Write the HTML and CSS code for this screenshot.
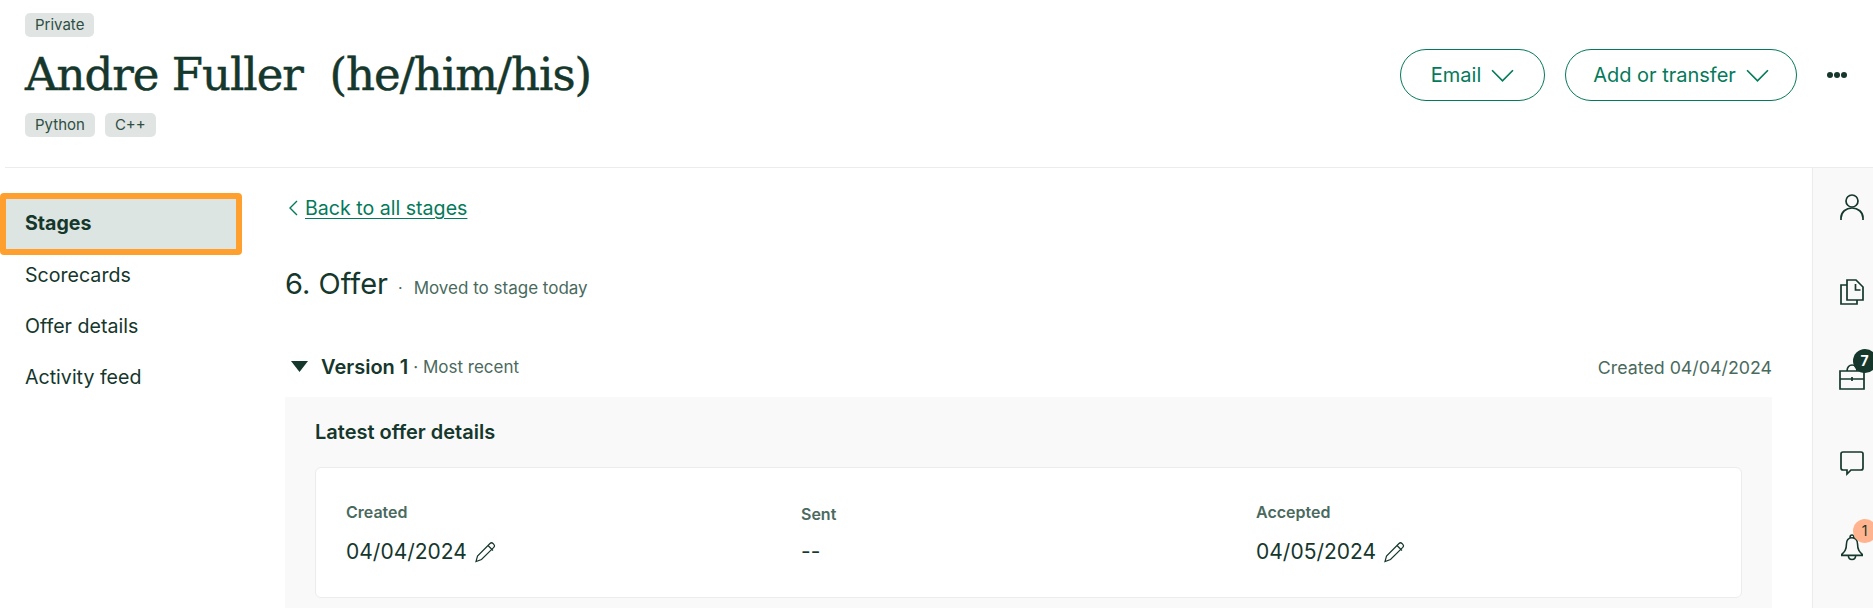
FILE: index.html
```html
<!DOCTYPE html>
<html lang="en">
<head>
    <meta charset="UTF-8">
    <title>Andre Fuller - Offer</title>
    <link rel="stylesheet" href="styles.css">
</head>
<body>
    <header class="page-header">
        <div class="candidate">
            <div class="chips"><span class="chip">Private</span></div>
            <h1>Andre Fuller&nbsp; (he/him/his)</h1>
            <div class="chips"><span class="chip">Python</span><span class="chip">C++</span></div>
        </div>
        <div class="actions">
            <button class="pill pill-email">Email
                <svg class="chevron" viewBox="0 0 22 12"><path d="M1 1l10 10L21 1"/></svg>
            </button>
            <button class="pill pill-add">Add or transfer
                <svg class="chevron" viewBox="0 0 22 12"><path d="M1 1l10 10L21 1"/></svg>
            </button>
            <div class="dots"><i></i><i></i><i></i></div>
        </div>
    </header>

    <div class="layout">
        <nav class="sidebar">
            <a class="nav-item active">Stages</a>
            <a class="nav-item">Scorecards</a>
            <a class="nav-item">Offer details</a>
            <a class="nav-item">Activity feed</a>
        </nav>

        <main class="content">
            <div class="back">
                <svg class="back-icon" viewBox="0 0 10 16"><path d="M9 1L2 8l7 7"/></svg>
                <a>Back to all stages</a>
            </div>

            <div class="stage-title">
                <h2>6. Offer</h2>
                <span class="stage-dot">·</span>
                <span class="stage-note">Moved to stage today</span>
            </div>

            <div class="version-row">
                <div class="version-left">
                    <svg class="caret" viewBox="0 0 17 11"><path d="M0 0h17L8.500 11z"/></svg>
                    <strong>Version 1</strong>
                    <span class="muted">· Most recent</span>
                </div>
                <span class="muted created-date">Created 04/04/2024</span>
            </div>

            <section class="panel">
                <h3>Latest offer details</h3>
                <div class="card">
                    <div class="field">
                        <div class="field-label">Created</div>
                        <div class="field-value">04/04/2024
                            <svg class="pencil" viewBox="0 0 22 22"><path d="M16 2.500c1-1 2-1 3 0l.8.800c1 1 1 2 0 3L7.500 18.500 2 20.500l1.500-5.500zM14 4.500l5 5"/></svg>
                        </div>
                    </div>
                    <div class="field field-sent">
                        <div class="field-label">Sent</div>
                        <div class="field-value">--</div>
                    </div>
                    <div class="field">
                        <div class="field-label">Accepted</div>
                        <div class="field-value">04/05/2024
                            <svg class="pencil" viewBox="0 0 22 22"><path d="M16 2.500c1-1 2-1 3 0l.8.800c1 1 1 2 0 3L7.500 18.500 2 20.500l1.500-5.500zM14 4.500l5 5"/></svg>
                        </div>
                    </div>
                </div>
            </section>
        </main>

        <aside class="rail">
            <div class="rail-item">
                <svg viewBox="0 0 24 26"><circle cx="12" cy="7" r="6"/><path d="M1 26v-2c0-6 5-10 11-10s11 4 11 10v2"/></svg>
            </div>
            <div class="rail-item">
                <svg viewBox="0 0 24 26"><path d="M7 1h9l7 7v13H7zM15.500 5v6h5M7 6H1v19h16v-4"/></svg>
            </div>
            <div class="rail-item">
                <svg viewBox="0 0 26 26"><path d="M1 7h24v18H1zM1 15h24M8 7c0-8 10-8 10 0M13 13v4"/></svg>
                <span class="badge badge-dark">7</span>
            </div>
            <div class="rail-item">
                <svg viewBox="0 0 24 26"><path d="M3 3h18a2 2 0 0 1 2 2v14a2 2 0 0 1-2 2H11l-4 4v-4H3a2 2 0 0 1-2-2V5a2 2 0 0 1 2-2z"/></svg>
            </div>
            <div class="rail-item">
                <svg viewBox="0 0 24 28"><path d="M10 4.500V3a2 2 0 0 1 4 0v1.500M12 4c-4 0-6 3-6 7 0 6-2 8-5 11v1h22v-1c-3-3-5-5-5-11 0-4-2-7-6-7zM8 23c0 6 8 6 8 0"/></svg>
                <span class="badge badge-peach">1</span>
            </div>
        </aside>
    </div>
</body>
</html>
```

FILE: styles.css
```css
:root {
    --ink: #15372c;
    --green: #047a5a;
    --muted: #4a6a5e;
    --chip: #e0e5e3;
    --line: #ececec;
    --soft: #f9f9f9;
    --orange: #ff9f2e;
}

* {
    margin: 0;
    padding: 0;
    box-sizing: border-box;
}

html, body {
    height: 608px;
    overflow: hidden;
}

body {
    font-family: Inter, sans-serif;
    color: var(--ink);
    background: #ffffff;
}

/* top bar */
.page-header {
    height: 168px;
    margin-left: 5px;
    padding: 13px 0 0 20px;
    border-bottom: 1px solid var(--line);
    display: flex;
    justify-content: space-between;
}

h1 {
    font-family: "DejaVu Serif", serif;
    font-size: 45px;
    font-weight: 400;
    line-height: 76px;
    letter-spacing: -1px;
    -webkit-text-stroke: 0.5px var(--ink);
}

.chips {
    display: flex;
    gap: 10px;
}

.chip {
    height: 24px;
    padding: 0 10px;
    border-radius: 5px;
    background: var(--chip);
    font-size: 15px;
    line-height: 24px;
    color: #2f4f44;
}

.actions {
    display: flex;
    align-items: center;
    height: 52px;
    margin-top: 36px;
    padding-right: 26px;
}

.pill {
    height: 52px;
    border: 1px solid var(--green);
    border-radius: 26px;
    background: #fff;
    color: var(--green);
    font: 400 20px Inter, sans-serif;
    display: flex;
    align-items: center;
    justify-content: center;
    gap: 10px;
}

.pill-email { width: 145px; }
.pill-add { width: 232px; margin-left: 20px; }

.chevron {
    width: 23px;
    height: 13px;
    fill: none;
    stroke: var(--green);
    stroke-width: 1.6;
}

.dots {
    display: flex;
    gap: 1px;
    margin-left: 30px;
}

.dots i {
    width: 6px;
    height: 6px;
    border-radius: 50%;
    background: var(--ink);
}

/* three columns below the bar */
.layout {
    display: grid;
    grid-template-columns: 242px 1fr 61px;
    height: 440px;
}

.sidebar {
    padding-top: 25px;
    display: flex;
    flex-direction: column;
}

.nav-item {
    display: block;
    height: 51px;
    padding-left: 25px;
    font-size: 19.600px;
    line-height: 51px;
    color: var(--ink);
}

.nav-item.active {
    height: 62px;
    margin-bottom: -5px;
    padding-left: 19px;
    border: 6px solid var(--orange);
    border-radius: 4px;
    background: #dce5e1;
    line-height: 49px;
    font-weight: 700;
}

.content {
    padding: 28px 40px 0 43px;
}

.back {
    display: flex;
    align-items: center;
    gap: 7px;
    height: 24px;
    margin-left: 3px;
    color: var(--green);
    font-size: 19.600px;
}

.back a {
    text-decoration: underline;
    text-underline-offset: 3px;
}

.back-icon {
    width: 10px;
    height: 16px;
    fill: none;
    stroke: var(--green);
    stroke-width: 1.4;
}

.stage-title {
    display: flex;
    align-items: baseline;
    margin-top: 44px;
    height: 40px;
}

h2 {
    font-size: 29px;
    font-weight: 400;
    line-height: 40px;
}

.stage-dot {
    margin: 0 11px 0 10px;
    color: var(--muted);
}

.stage-note {
    font-size: 17px;
    color: var(--muted);
}

.version-row {
    display: flex;
    justify-content: space-between;
    align-items: center;
    height: 24px;
    margin-top: 51px;
    font-size: 17px;
}

.version-left {
    display: flex;
    align-items: center;
}

.caret {
    width: 17px;
    height: 11px;
    margin: 0 13px 2px 6px;
    fill: var(--ink);
}

.version-left strong {
    font-size: 20px;
    font-weight: 600;
    margin-right: 5px;
}

.muted {
    color: var(--muted);
}

.created-date {
    font-size: 17.800px;
}

.panel {
    margin-top: 18px;
    height: 221px;
    padding: 23px 30px 0 30px;
    background: var(--soft);
}

h3 {
    font-size: 20px;
    font-weight: 600;
    line-height: 24px;
}

.card {
    display: grid;
    grid-template-columns: 455px 455px 1fr;
    height: 131px;
    margin-top: 23px;
    padding: 32px 30px 0;
    background: #fff;
    border: 1px solid var(--line);
    border-radius: 6px;
}

.field-label {
    font-size: 16px;
    font-weight: 600;
    line-height: 24px;
    color: var(--muted);
}

.field-sent .field-label {
    margin-top: 2px;
    margin-bottom: -2px;
}

.field-value {
    display: flex;
    align-items: center;
    gap: 7px;
    margin-top: 16px;
    font-size: 21px;
    line-height: 24px;
}

.pencil {
    width: 22px;
    height: 22px;
    fill: none;
    stroke: var(--ink);
    stroke-width: 1.2;
}

/* right icon rail */
.rail {
    display: flex;
    flex-direction: column;
    align-items: center;
    gap: 59px;
    padding: 26px 0 0 17px;
    background: var(--soft);
    border-left: 1px solid var(--line);
}

.rail-item {
    position: relative;
    width: 26px;
    height: 26px;
}

.rail-item svg {
    display: block;
    width: 26px;
    height: 26px;
    fill: none;
    stroke: var(--ink);
    stroke-width: 1.7;
    overflow: visible;
}

.badge {
    position: absolute;
    top: -15px;
    left: 14px;
    width: 24px;
    height: 24px;
    border-radius: 50%;
    font-size: 14px;
    line-height: 24px;
    text-align: center;
}

.badge-dark {
    background: var(--ink);
    color: #fff;
    font-weight: 700;
}

.badge-peach {
    background: #ffb48f;
    color: var(--ink);
}
```
